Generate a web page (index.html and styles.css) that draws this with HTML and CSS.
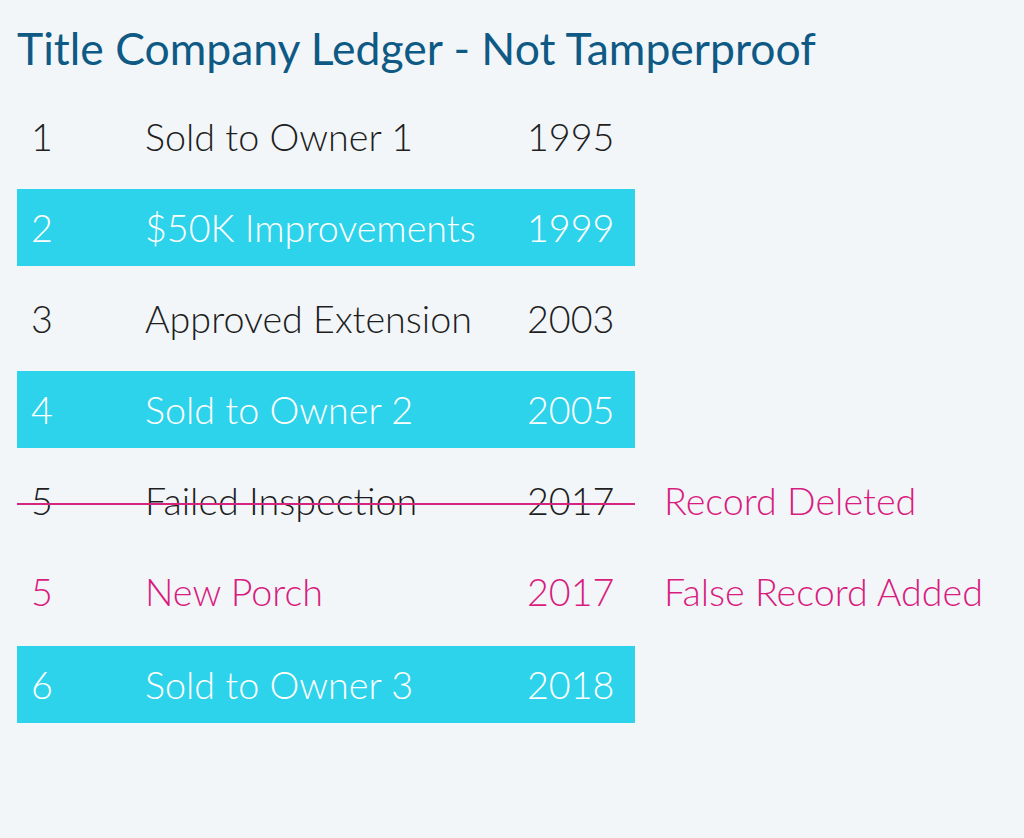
FILE: index.html
```html
<!DOCTYPE html>
<html>
<head>
<meta charset="utf-8">
<link rel="stylesheet" href="styles.css">
</head>
<body>
<main class="page">
  <h1 class="title">Title Company Ledger - Not Tamperproof</h1>
  <div class="ledger">
    <div class="line">
      <div class="bar"><span class="num">1</span><span class="desc">Sold to Owner 1</span><span class="year">1995</span></div>
      <div class="note"></div>
    </div>
    <div class="line">
      <div class="bar hi"><span class="num">2</span><span class="desc">$50K Improvements</span><span class="year">1999</span></div>
      <div class="note"></div>
    </div>
    <div class="line">
      <div class="bar"><span class="num">3</span><span class="desc">Approved Extension</span><span class="year">2003</span></div>
      <div class="note"></div>
    </div>
    <div class="line">
      <div class="bar hi"><span class="num">4</span><span class="desc">Sold to Owner 2</span><span class="year">2005</span></div>
      <div class="note"></div>
    </div>
    <div class="line">
      <div class="bar struck"><span class="num">5</span><span class="desc">Failed Inspection</span><span class="year">2017</span></div>
      <div class="note">Record Deleted</div>
    </div>
    <div class="line">
      <div class="bar fake"><span class="num">5</span><span class="desc">New Porch</span><span class="year">2017</span></div>
      <div class="note">False Record Added</div>
    </div>
    <div class="line last">
      <div class="bar hi"><span class="num">6</span><span class="desc">Sold to Owner 3</span><span class="year">2018</span></div>
      <div class="note"></div>
    </div>
  </div>
</main>
</body>
</html>
```
FILE: styles.css
```css
html, body {
  margin: 0;
  padding: 0;
  background: #f2f6f9;
}
body {
  width: 1024px;
  height: 838px;
  overflow: hidden;
  font-family: Lato, "Liberation Sans", sans-serif;
}
.page {
  padding: 22px 0 0 17px;
}
.title {
  margin: 0;
  font-family: Lato, sans-serif;
  font-weight: 400;
  font-size: 44.5px;
  line-height: 52px;
  color: #0f5a85;
  letter-spacing: 0;
}
.ledger {
  margin-top: 24px;
  display: flex;
  flex-direction: column;
  gap: 14px;
}
.line {
  display: grid;
  grid-template-columns: 618px auto;
  column-gap: 29px;
  align-items: center;
}
.line.last {
  margin-top: 2px;
}
.bar {
  position: relative;
  height: 77px;
  display: flex;
  align-items: center;
  padding-left: 14px;
  font-weight: 300;
  font-size: 37.7px;
  color: #1e1e1e;
}
.bar.hi {
  background: #2dd3ea;
  color: #ffffff;
}
.bar.fake {
  color: #d91c80;
}
.bar.struck::after {
  content: "";
  position: absolute;
  left: 0;
  right: 0;
  top: 41px;
  height: 2px;
  background: #d6257f;
}
.num {
  width: 114px;
}
.desc {
  width: 382px;
}
.note {
  font-weight: 300;
  font-size: 37.7px;
  color: #d91c80;
}
```
